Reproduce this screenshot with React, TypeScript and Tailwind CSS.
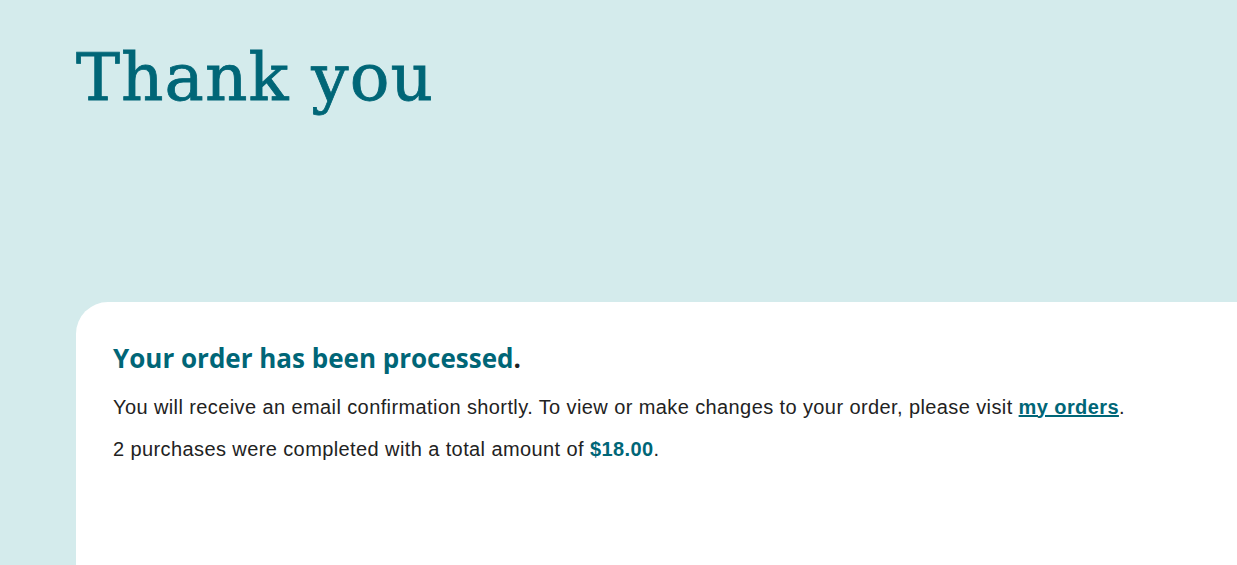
export default function App() {
  return (
    <div className="min-h-[565px] bg-[#d4ebec] overflow-hidden">
      <div className="pl-[76px] pt-[45px] h-[302px]">
        <h1 className="text-[66px] leading-none text-[#006677] font-['DejaVu_Serif',serif] tracking-[1px] [-webkit-text-stroke:0.8px_#006677]">
          Thank you
        </h1>
      </div>
      <div className="ml-[76px] bg-white rounded-tl-[32px] min-h-[263px] pl-[37px] pt-[40px] font-['Liberation_Sans',Arial,sans-serif] text-[#222222]">
        <h2 className="text-[26px] font-bold text-[#006677] font-['Open_Sans',sans-serif] leading-tight">
          Your order has been processed<span className="text-[#222]">.</span>
        </h2>
        <p className="mt-[18px] text-[20px] leading-[28px] tracking-[0.4px]">
          You will receive an email confirmation shortly. To view or make changes to your order, please visit{" "}
          <a href="#" className="font-bold text-[#006677] underline">my orders</a>.
        </p>
        <p className="mt-[14px] text-[20px] leading-[28px] tracking-[0.4px]">
          2 purchases were completed with a total amount of{" "}
          <span className="font-bold text-[#006677]">$18.00</span>.
        </p>
      </div>
    </div>
  );
}
